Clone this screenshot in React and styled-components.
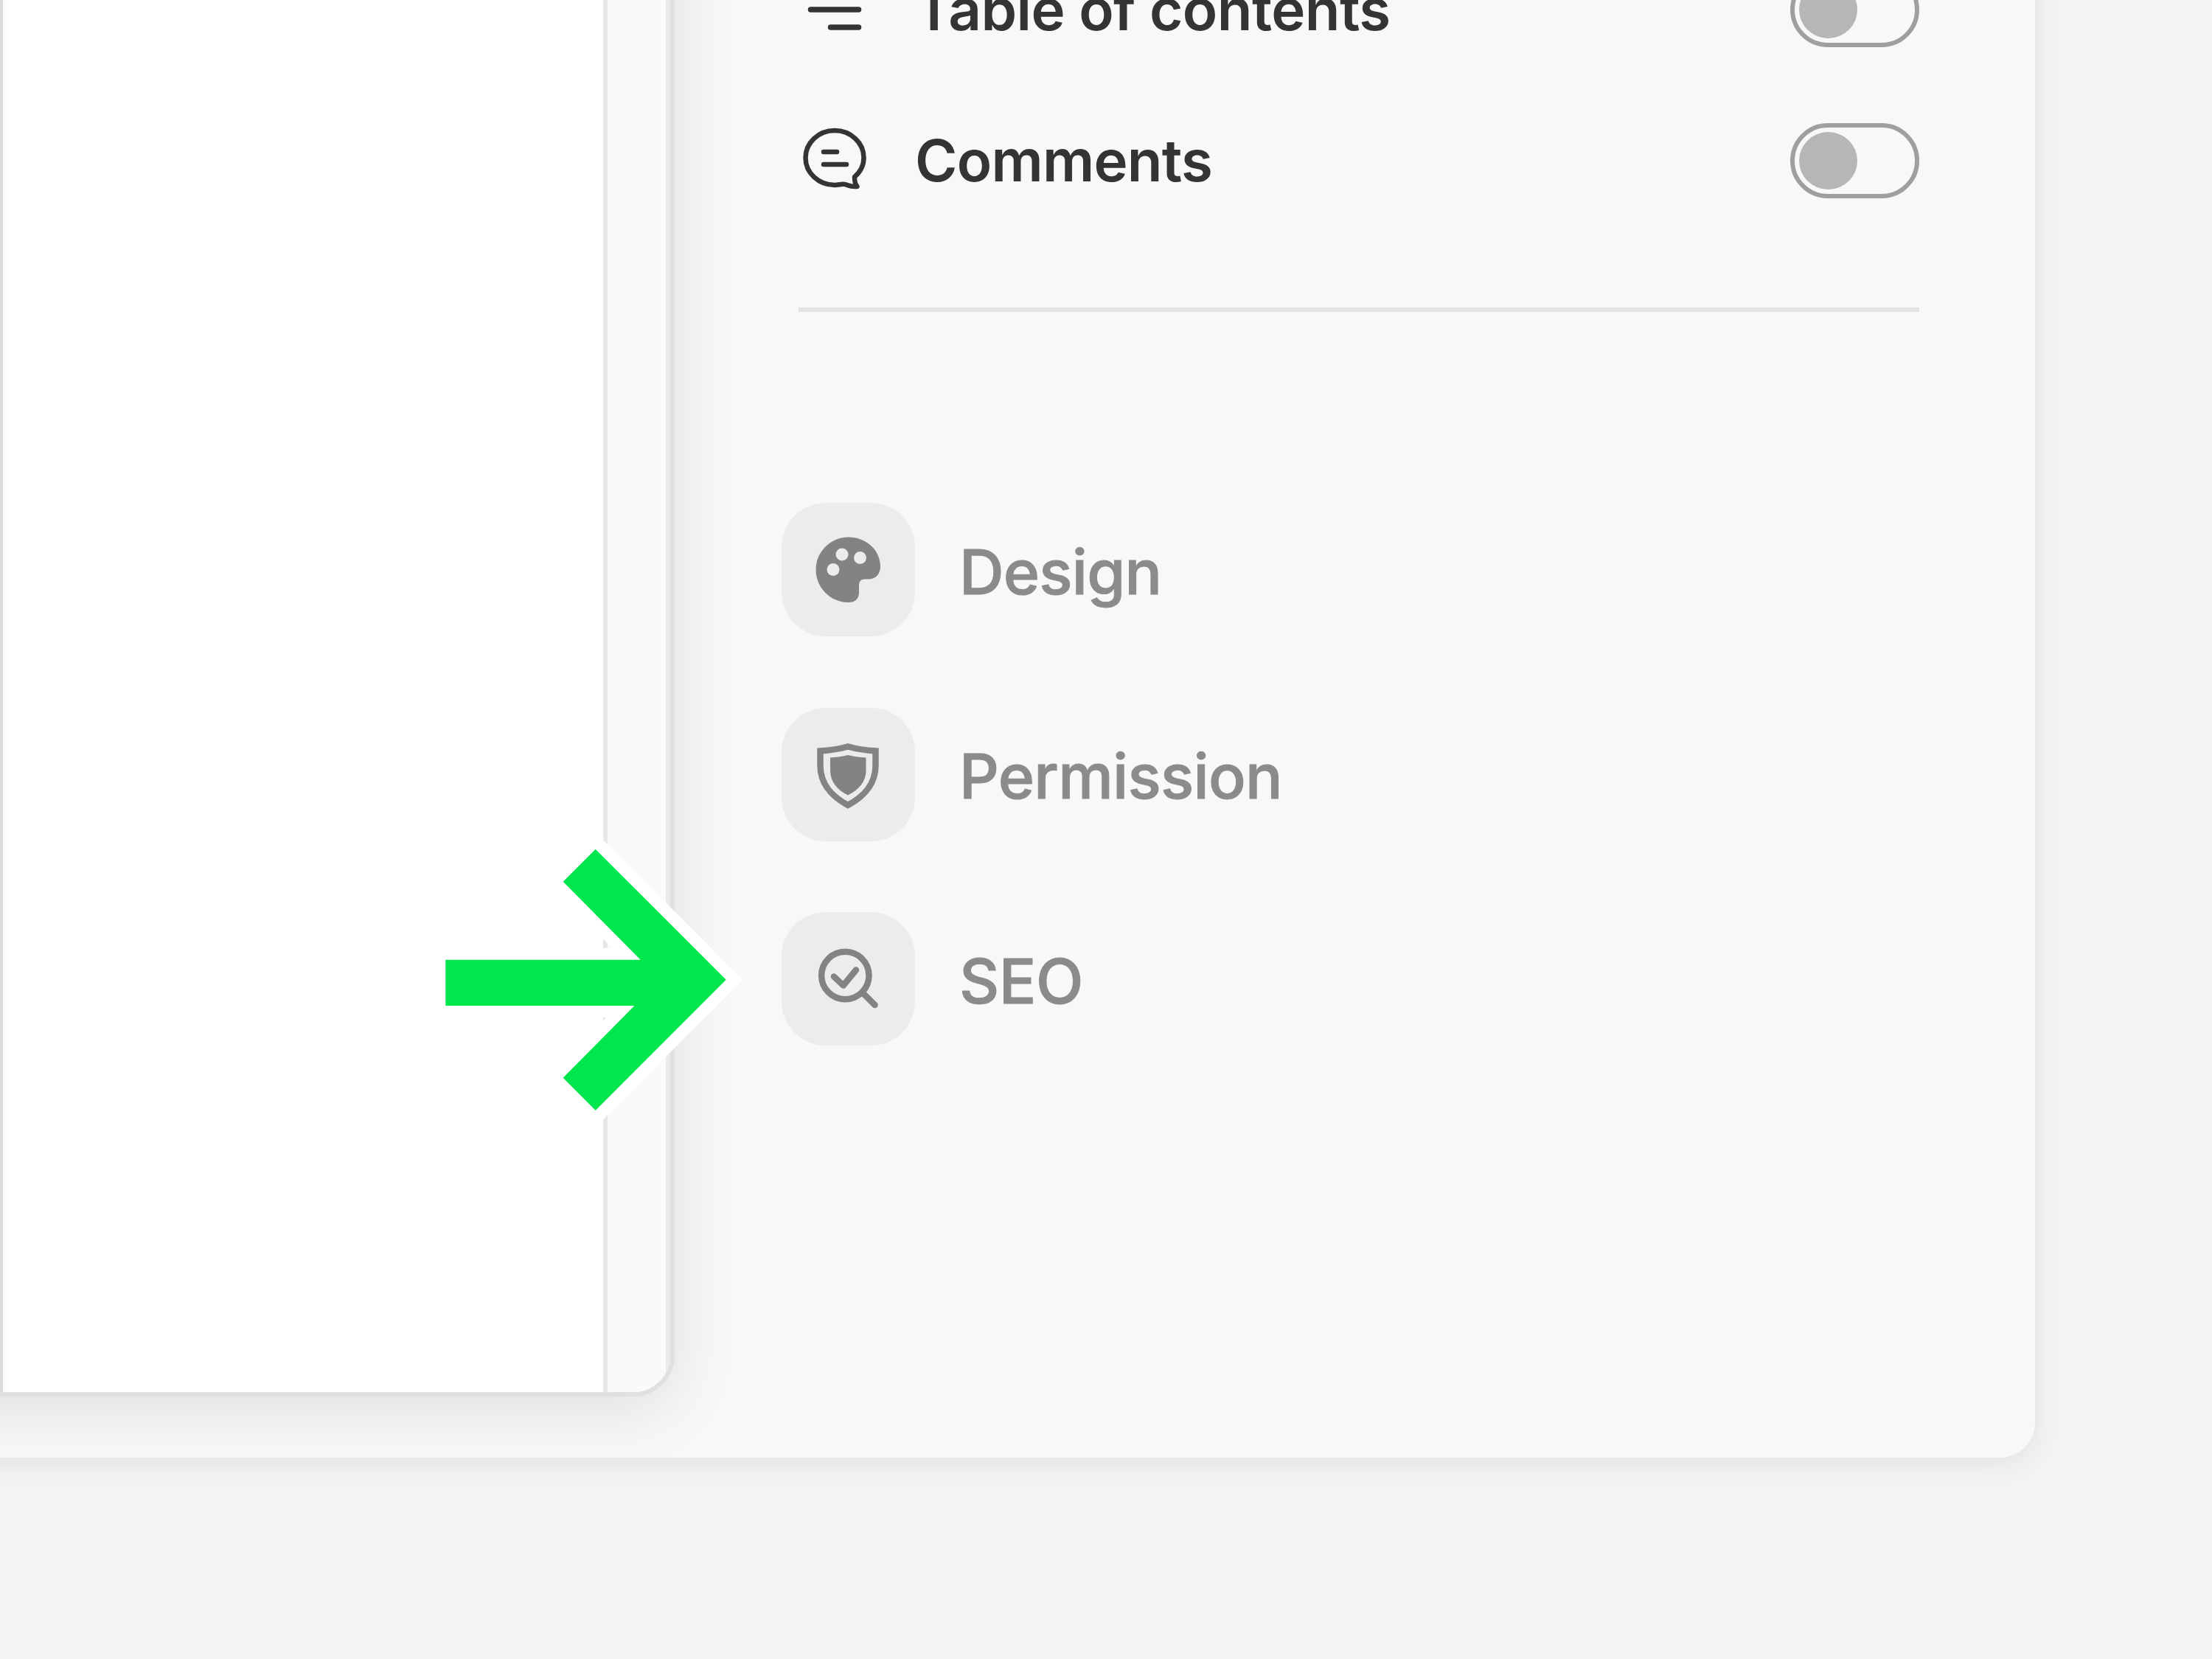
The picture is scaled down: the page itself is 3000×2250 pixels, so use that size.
import React, { useState } from "react";
import styled, { createGlobalStyle } from "styled-components";

const GlobalStyle = createGlobalStyle`
  * {
    box-sizing: border-box;
  }
  body {
    margin: 0;
    background-color: #f3f3f3;
    font-family: Inter, "Liberation Sans", sans-serif;
  }
`;
const Page = styled.div`
  width: 3000px;
  height: 2250px;
  position: relative;
  overflow: hidden;
  background-color: #f3f3f3;
`;
/* The panel starts outside the page, so its top and left edges are cut off */
const Panel = styled.div`
  display: flex;
  align-items: flex-start;
  width: 3000px;
  height: 2217px;
  margin: -240px 0 0 -240px;
  overflow: hidden;
  background-color: #f8f8f8;
  border-radius: 0 0 48px 0;
  box-shadow: 0 6px 36px rgba(0, 0, 0, 0.08);
`;
const Preview = styled.div`
  flex-shrink: 0;
  display: flex;
  width: 1155px;
  height: 2134px;
  padding-left: 240px;
  overflow: hidden;
  border: solid #e0e0e0;
  border-width: 0 6px 6px 0;
  border-radius: 0 0 56px 0;
  background-color: #fff;
  box-shadow: 0 18px 90px rgba(0, 0, 0, 0.1);
`;
const Canvas = styled.div`
  flex: 1;
  border-left: 4px solid #d9d9d9;
  background: linear-gradient(to right, #f9f9f9, #fff 10px);
`;
const Gutter = styled.div`
  width: 91px;
  border: solid #e7e7e7;
  border-width: 0 6px;
  border-right-color: #ebebeb;
  background-color: #fafafa;
`;
const Sidebar = styled.div`
  flex: 1;
  padding: 202px 157px 0 168px;
`;
const Options = styled.div`
  display: flex;
  flex-direction: column;
  gap: 103px;
`;
const Option = styled.div`
  display: flex;
  align-items: center;
  height: 102px;
  color: #333534;

  svg {
    flex-shrink: 0;
    width: 96px;
    height: 102px;
  }
`;
const OptionLabel = styled.span`
  flex: 1;
  margin-left: 62px;
  font-size: 78px;
  font-weight: 600;
  line-height: 102px;
  white-space: nowrap;
  letter-spacing: ${(props) => props.$spacing};
`;
const Toggle = styled.button`
  display: flex;
  justify-content: ${(props) => (props.$on ? "flex-end" : "flex-start")};
  width: 175px;
  height: 102px;
  padding: 6px;
  border: 6px solid #9f9f9f;
  border-radius: 51px;
  background: none;
`;
const Knob = styled.span`
  width: 79px;
  height: 78px;
  border-radius: 50%;
  background-color: #b6b6b6;
`;
const Divider = styled.hr`
  height: 6px;
  margin: 148px 0 259px;
  border: 0;
  background-color: #e3e3e3;
`;
const Menu = styled.div`
  display: flex;
  flex-direction: column;
  gap: 96.5px;
  margin-left: -23px;
`;
const MenuItem = styled.div`
  display: flex;
  align-items: center;
  gap: 60px;
  color: #838383;
`;
const Tile = styled.div`
  width: 181px;
  height: 181px;
  border-radius: 60px;
  background-color: #ececec;

  svg {
    display: block;
    width: 100%;
    height: 100%;
  }
`;
const MenuLabel = styled.span`
  font-size: 84px;
  font-weight: 500;
  line-height: 100px;
  padding-top: 6px;
  color: #8b8b8b;
  -webkit-text-stroke: 1px #8b8b8b;
  white-space: nowrap;
  letter-spacing: ${(props) => props.$spacing};
`;
const Pointer = styled.svg`
  position: absolute;
  left: 570px;
  top: 1120px;
  width: 450px;
  height: 420px;
`;

const ContentsIcon = () => (
  <svg
    viewBox="0 0 96 102"
    fill="none"
    stroke="currentColor"
    strokeWidth="7.5"
    strokeLinecap="round"
  >
    <path d="M16.5 51H81.5M43.5 75H81.5" />
  </svg>
);

const CommentsIcon = () => (
  <svg
    viewBox="0 0 96 102"
    fill="none"
    stroke="currentColor"
    strokeWidth="6.5"
    strokeLinejoin="round"
    strokeLinecap="round"
  >
    <path d="M76 73Q88.500 62 88.500 47A39.500 37 0 1 0 49 84C56 84 61 81 66 84Q72 86.500 79.500 86Q76 82 76 73Z" />
    <path d="M34 39H52M34 56H65" />
  </svg>
);

const DesignIcon = () => (
  <svg viewBox="0 0 181 181" fill="currentColor">
    <path d="M90.500 46.500C115 46.500 134 64 134 86.500C134 97 127 103.500 118 103.500H113Q105 103.500 105 111.500V121Q105 135 90 135C66 134.500 46.500 115 46.500 90.500C46.500 66.500 66.500 46.500 90.500 46.500Z" />
    <g fill="#ececec">
      <circle cx="82" cy="70" r="8.500" />
      <circle cx="106.500" cy="74.500" r="8.500" />
      <circle cx="70" cy="90.500" r="8.500" />
    </g>
  </svg>
);

const PermissionIcon = () => (
  <svg viewBox="0 0 181 181" fill="currentColor">
    <path
      d="M52.500 58.500Q74 57 90 52.500Q106 57 127.500 58.500V78C127.500 104 112 120 90 132C68 120 52.500 104 52.500 78Z"
      fill="none"
      stroke="currentColor"
      strokeWidth="8.5"
    />
    <path d="M66 67.500Q80 66.500 90 64Q100 66.500 114.500 67.500V85C114.500 100 105 111 90 118.500C75 111 66 100 66 85Z" />
  </svg>
);

const SeoIcon = () => (
  <svg
    viewBox="0 0 181 181"
    fill="none"
    stroke="currentColor"
    strokeWidth="8.5"
    strokeLinecap="round"
  >
    <circle cx="86.300" cy="86" r="32.200" />
    <path d="M110 109.500L126.500 126" />
    <path d="M71 87.500L83.700 99.500L101 78.500" strokeLinejoin="round" />
  </svg>
);

const optionsData = [
  { label: "Table of contents", icon: <ContentsIcon />, spacing: "-0.55px" },
  { label: "Comments", icon: <CommentsIcon />, spacing: "-0.75px" },
];

const menuData = [
  { label: "Design", icon: <DesignIcon />, spacing: "-0.8px" },
  { label: "Permission", icon: <PermissionIcon />, spacing: "-0.7px" },
  { label: "SEO", icon: <SeoIcon />, spacing: "-0.4px" },
];

const App = () => {
  const [enabled, setEnabled] = useState({});

  const handleToggle = (label) => {
    setEnabled({ ...enabled, [label]: !enabled[label] });
  };

  return (
    <>
      <GlobalStyle />
      <Page>
        <Panel>
          <Preview>
            <Canvas />
            <Gutter />
          </Preview>
          <Sidebar>
            <Options>
              {optionsData.map((item) => (
                <Option key={item.label}>
                  {item.icon}
                  <OptionLabel $spacing={item.spacing}>{item.label}</OptionLabel>
                  <Toggle
                    $on={enabled[item.label]}
                    onClick={() => handleToggle(item.label)}
                  >
                    <Knob />
                  </Toggle>
                </Option>
              ))}
            </Options>
            <Divider />
            <Menu>
              {menuData.map((item) => (
                <MenuItem key={item.label}>
                  <Tile>{item.icon}</Tile>
                  <MenuLabel $spacing={item.spacing}>{item.label}</MenuLabel>
                </MenuItem>
              ))}
            </Menu>
          </Sidebar>
        </Panel>
        <Pointer viewBox="570 1120 450 420">
          <path
            d="M604.300 1301.700H868.700L763.700 1195.700L807.700 1151.700L984.700 1328.700L807.700 1506L763.700 1461.700L860.500 1364H604.300Z"
            fill="#00e64d"
            stroke="#fff"
            strokeWidth="32"
            paintOrder="stroke"
          />
        </Pointer>
      </Page>
    </>
  );
};

export default App;
